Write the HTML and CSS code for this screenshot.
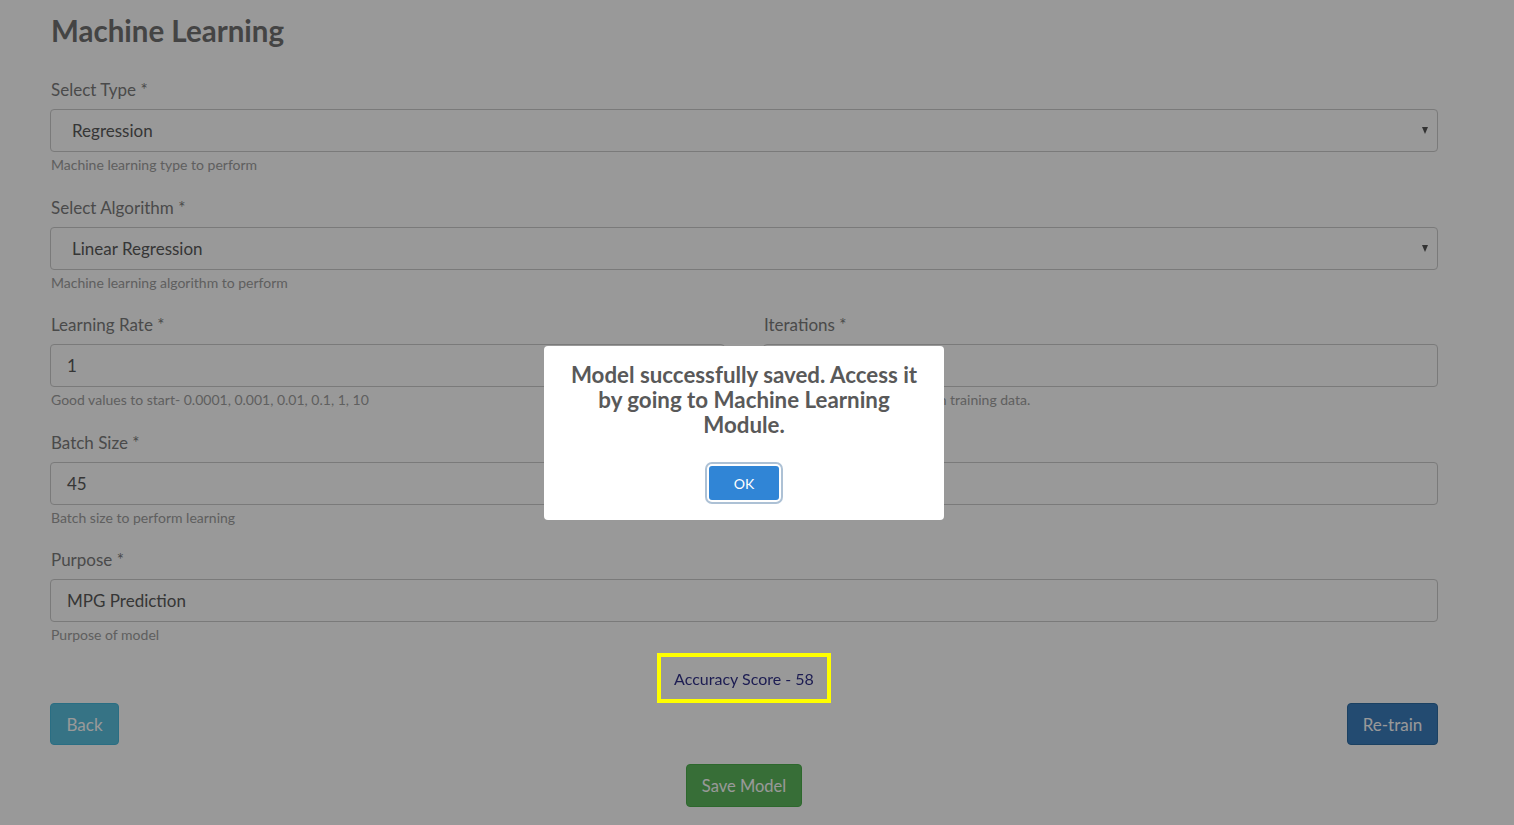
FILE: index.html
```html
<!DOCTYPE html>
<html lang="en">
<head>
<meta charset="utf-8">
<title>Machine Learning</title>
<link rel="stylesheet" href="styles.css">
</head>
<body>
<div class="page">
  <h1 class="title">Machine Learning</h1>

  <div class="group">
    <label class="label">Select Type *</label>
    <div class="select"><span>Regression</span></div>
    <div class="help">Machine learning type to perform</div>
  </div>

  <div class="group">
    <label class="label">Select Algorithm *</label>
    <div class="select"><span>Linear Regression</span></div>
    <div class="help">Machine learning algorithm to perform</div>
  </div>

  <div class="cols">
    <div class="group">
      <label class="label">Learning Rate *</label>
      <div class="input">1</div>
      <div class="help">Good values to start- 0.0001, 0.001, 0.01, 0.1, 1, 10</div>
    </div>
    <div class="group">
      <label class="label">Iterations *</label>
      <div class="input">100</div>
      <div class="help">Number of times to iterate on training data.</div>
    </div>
  </div>

  <div class="cols">
    <div class="group">
      <label class="label">Batch Size *</label>
      <div class="input">45</div>
      <div class="help">Batch size to perform learning</div>
    </div>
    <div class="group">
      <label class="label">Test Size *</label>
      <div class="input">20</div>
      <div class="help">&nbsp;</div>
    </div>
  </div>

  <div class="group">
    <label class="label">Purpose *</label>
    <div class="input">MPG Prediction</div>
    <div class="help">Purpose of model</div>
  </div>

  <div class="score-row">
    <div class="score">Accuracy Score - 58</div>
  </div>

  <div class="actions">
    <button class="btn btn-info">Back</button>
    <button class="btn btn-primary">Re-train</button>
  </div>

  <div class="save-row">
    <button class="btn btn-success">Save Model</button>
  </div>
</div>

<div class="backdrop"></div>

<div class="modal">
  <p class="modal-text">Model successfully saved. Access it<br>by going to Machine Learning<br>Module.</p>
  <div class="modal-actions">
    <button class="modal-ok">OK</button>
  </div>
</div>
</body>
</html>
```

FILE: styles.css
```css
* { box-sizing: border-box; }

html, body {
  margin: 0;
  padding: 0;
  background: #ffffff;
}

body {
  font-family: "Lato", "Liberation Sans", sans-serif;
  color: #5c5c5c;
  overflow: hidden;
}

.page {
  width: 1388px;
  margin-left: 50px;
  display: flex;
  flex-direction: column;
}

.title {
  margin: 13px 0 28px 1px;
  font-size: 29.5px;
  line-height: 36px;
  font-weight: 700;
  color: #727272;
}

.group {
  display: flex;
  flex-direction: column;
  margin-bottom: 19.5px;
}

.label {
  font-size: 17px;
  line-height: 26px;
  color: #7c7c7c;
  margin: 0 0 6px 1px;
}

.select,
.input {
  height: 43px;
  border: 1px solid #cccccc;
  border-radius: 4px;
  font-size: 17px;
  color: #5a5a5a;
  display: flex;
  align-items: center;
}

.select {
  padding-left: 21px;
  padding-right: 9px;
  justify-content: space-between;
}

.select::after {
  content: "";
  width: 0;
  height: 0;
  border-left: 3.5px solid transparent;
  border-right: 3.5px solid transparent;
  border-top: 7px solid #555555;
}

.input {
  padding-left: 16px;
}

.help {
  margin: 3px 0 0 1px;
  font-size: 14px;
  line-height: 20px;
  color: #9e9e9e;
}

.cols {
  display: grid;
  grid-template-columns: 1fr 1fr;
  column-gap: 38px;
}

.score-row {
  display: flex;
  justify-content: center;
  margin-top: -11.5px;
}

.score {
  position: relative;
  z-index: 20;
  width: 174px;
  height: 50px;
  border: 4px solid #ffff00;
  display: flex;
  align-items: center;
  justify-content: center;
  font-size: 16px;
  color: #1c1c52;
}

.actions {
  display: flex;
  justify-content: space-between;
}

.btn {
  font-family: inherit;
  font-size: 17px;
  color: #ffffff;
  border: 1px solid transparent;
  border-radius: 4px;
  height: 42px;
  padding: 0;
  cursor: pointer;
}

.btn-info { background: #5bc0de; border-color: #46b8da; width: 69px; }
.btn-primary { background: #3b7dbd; border-color: #2e6da4; width: 91px; }
.btn-success { background: #5cb85c; border-color: #4cae4c; width: 116px; height: 43px; font-size: 16.5px; }

.save-row {
  display: flex;
  justify-content: center;
  margin-top: 19px;
}

.backdrop {
  position: fixed;
  inset: 0;
  background: rgba(0, 0, 0, 0.4);
  z-index: 10;
}

.modal {
  position: fixed;
  left: 544px;
  top: 346px;
  width: 400px;
  height: 174px;
  background: #ffffff;
  border-radius: 4px;
  z-index: 30;
  display: flex;
  flex-direction: column;
  align-items: center;
  padding: 16px 6px 0;
}

.modal-text {
  margin: 0;
  text-align: center;
  font-size: 22.3px;
  line-height: 25px;
  font-weight: 700;
  color: #595959;
}

.modal-actions {
  margin-top: 29px;
}

.modal-ok {
  width: 70px;
  height: 34px;
  background: #3085d6;
  color: #ffffff;
  border: 0;
  border-radius: 3px;
  font-family: inherit;
  font-size: 14px;
  box-shadow: 0 0 0 2px #ffffff, 0 0 0 4px rgba(50, 100, 150, 0.4);
}
```
